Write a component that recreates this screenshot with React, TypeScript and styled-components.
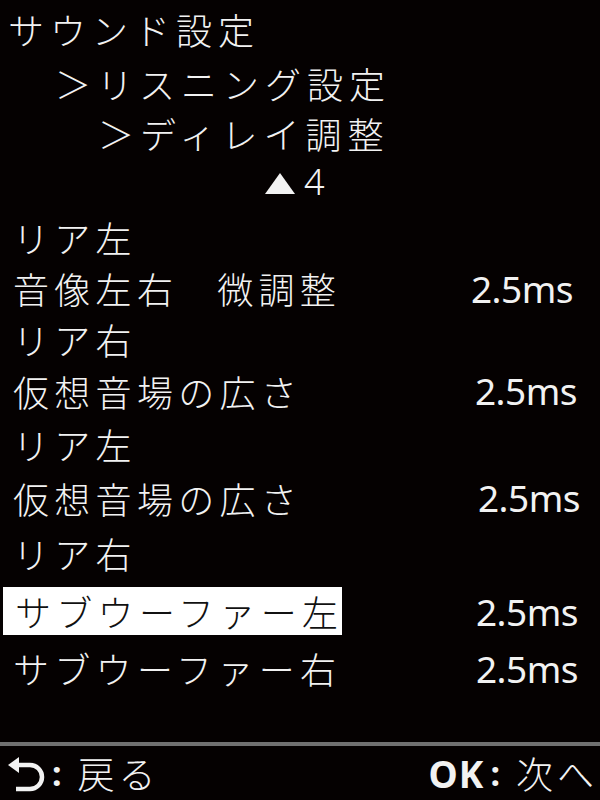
import React from 'react';
import styled, { createGlobalStyle } from 'styled-components';

const GlobalStyle = createGlobalStyle`
  html, body {
    margin: 0;
    padding: 0;
    background: #050101;
  }
  #root {
    width: 600px;
    height: 800px;
  }
`;

const Screen = styled.div`
  width: 600px;
  height: 800px;
  display: flex;
  flex-direction: column;
  background: #050101;
  color: #f2f2f2;
  font-family: "Noto Sans CJK JP", "Noto Sans", sans-serif;
  font-weight: 300;
  overflow: hidden;
`;

const HeaderLine = styled.div<{ $indent: number; $h: number }>`
  height: ${p => p.$h}px;
  display: flex;
  align-items: center;
  padding-left: ${p => p.$indent}px;
  font-size: 36px;
  letter-spacing: 6px;
  line-height: 1;
  white-space: nowrap;
`;

const PageMark = styled.div`
  height: 48px;
  display: flex;
  align-items: center;
  padding-left: 265px;
  gap: 9px;
  font-family: "Noto Sans", sans-serif;
  font-weight: 300;
  font-size: 36px;
  line-height: 1;
`;

const Triangle = styled.span`
  width: 0;
  height: 0;
  border-left: 15px solid transparent;
  border-right: 15px solid transparent;
  border-bottom: 21px solid #f2f2f2;
  margin-top: 2px;
`;

const List = styled.div`
  display: flex;
  flex-direction: column;
  padding-left: 3px;
  margin-top: 5px;
`;

const Row = styled.div<{ $h: number }>`
  height: ${p => p.$h}px;
  display: flex;
  align-items: center;
  justify-content: space-between;
`;

const Label = styled.div<{ $selected?: boolean }>`
  display: flex;
  align-items: center;
  height: 48px;
  box-sizing: border-box;
  padding-left: ${p => (p.$selected ? 12 : 10)}px;
  width: ${p => (p.$selected ? '339px' : 'auto')};
  background: ${p => (p.$selected ? '#ffffff' : 'transparent')};
  color: ${p => (p.$selected ? '#111111' : '#f2f2f2')};
  font-size: 36px;
  letter-spacing: 5.3px;
  line-height: 1;
  white-space: nowrap;
`;

const Gap = styled.span`
  display: inline-block;
  width: 39px;
`;

const Value = styled.div<{ $pr: number }>`
  padding-right: ${p => p.$pr}px;
  font-family: "Noto Sans", sans-serif;
  font-weight: 400;
  font-size: 37px;
  letter-spacing: -0.5px;
  line-height: 1;
`;

const Spacer = styled.div`
  flex: 1;
`;

const Divider = styled.div`
  height: 4px;
  background: #707070;
`;

const Footer = styled.div`
  height: 54px;
  display: flex;
  align-items: center;
  justify-content: space-between;
  padding: 0 2px 0 8px;
  font-size: 37px;
  letter-spacing: 4px;
  line-height: 1;
`;

const FooterItem = styled.div`
  display: flex;
  align-items: center;
`;

const OkText = styled.span`
  font-family: "Noto Sans", sans-serif;
  font-weight: 700;
  font-size: 37px;
  letter-spacing: 1px;
`;

const Colon = styled.span`
  font-family: "Noto Sans", sans-serif;
  font-weight: 700;
  font-size: 34px;
  margin: 0 12px 0 6px;
`;

const BackIcon = () => (
  <svg width="38" height="38" viewBox="0 0 38 38" fill="none">
    <path d="M8 11 H22 A12 12 0 0 1 22 35 H8" stroke="#f2f2f2" strokeWidth="4.5" />
    <path d="M0 11 L11 3 L11 19 Z" fill="#f2f2f2" />
  </svg>
);

type Item = { label: React.ReactNode; value?: string; h: number; pr?: number; selected?: boolean };

const items: Item[] = [
  { label: 'リア左', h: 52 },
  { label: <>音像左右<Gap />微調整</>, value: '2.5ms', h: 50, pr: 27 },
  { label: 'リア右', h: 51 },
  { label: '仮想音場の広さ', value: '2.5ms', h: 53, pr: 23 },
  { label: 'リア左', h: 54 },
  { label: '仮想音場の広さ', value: '2.5ms', h: 53, pr: 20 },
  { label: 'リア右', h: 57 },
  { label: 'サブウーファー左', value: '2.5ms', h: 60, pr: 22, selected: true },
  { label: 'サブウーファー右', value: '2.5ms', h: 54, pr: 22 },
];

export default function App() {
  return (
    <>
      <GlobalStyle />
      <Screen>
        <HeaderLine $indent={8} $h={58}>サウンド設定</HeaderLine>
        <HeaderLine $indent={55} $h={50}>＞リスニング設定</HeaderLine>
        <HeaderLine $indent={98} $h={50}>＞ディレイ調整</HeaderLine>
        <PageMark>
          <Triangle />
          4
        </PageMark>
        <List>
          {items.map((it, i) => (
            <Row key={i} $h={it.h}>
              <Label $selected={it.selected}>{it.label}</Label>
              {it.value && <Value $pr={it.pr ?? 22}>{it.value}</Value>}
            </Row>
          ))}
        </List>
        <Spacer />
        <Divider />
        <Footer>
          <FooterItem>
            <BackIcon />
            <Colon>:</Colon>
            戻る
          </FooterItem>
          <FooterItem>
            <OkText>OK</OkText>
            <Colon>:</Colon>
            次へ
          </FooterItem>
        </Footer>
      </Screen>
    </>
  );
}
